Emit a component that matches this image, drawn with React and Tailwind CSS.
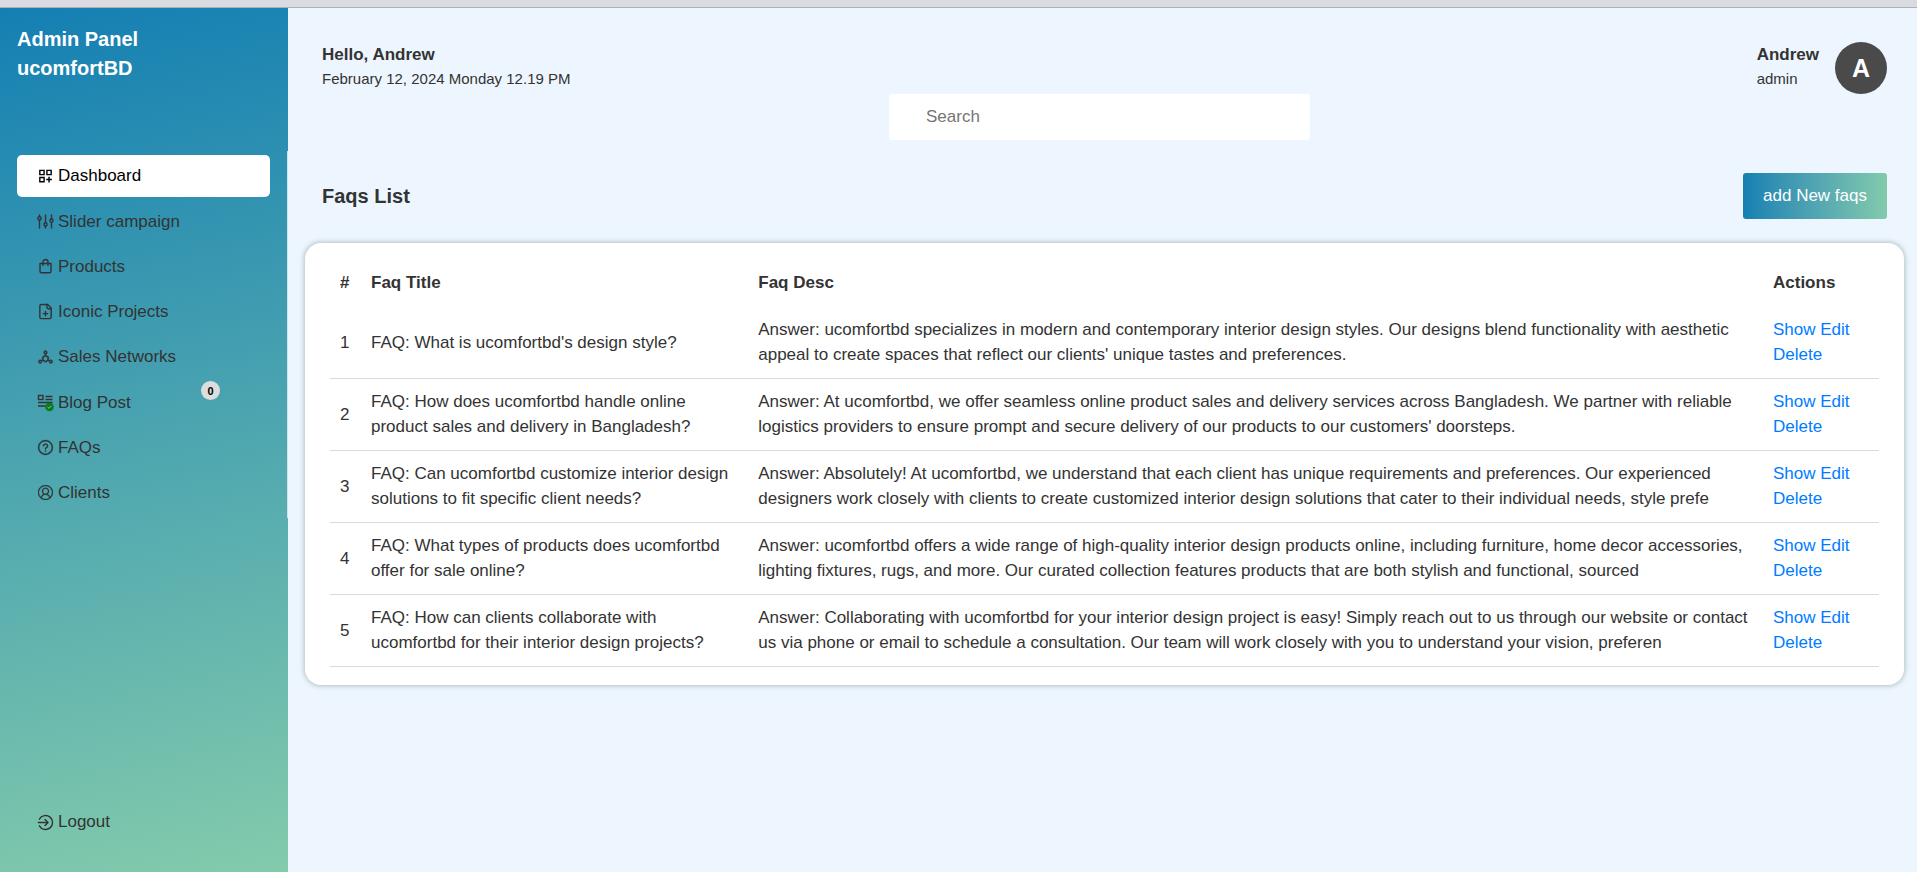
import { MdOutlineDashboardCustomize } from "react-icons/md";
import { AiOutlineDeploymentUnit, AiOutlineQuestionCircle } from "react-icons/ai";
import { LuFilePlus } from "react-icons/lu";
import { VscAccount } from "react-icons/vsc";

function Glyph({ children }) {
  return (
    <svg
      viewBox="0 0 17 17"
      className="size-[17px]"
      fill="none"
      stroke="currentColor"
      strokeWidth="1.4"
      strokeLinecap="round"
      strokeLinejoin="round"
      aria-hidden="true"
    >
      {children}
    </svg>
  );
}

function SlidersIcon() {
  return (
    <Glyph>
      <path d="M2.5 2v1.6M2.5 7V15M8.5 2v7.6M8.5 13V15M14.5 2v4M14.5 9.400V15" />
      <circle cx="2.5" cy="5.4" r="1.6" />
      <circle cx="8.5" cy="11.4" r="1.6" />
      <circle cx="14.5" cy="7.6" r="1.6" />
    </Glyph>
  );
}

function BagIcon() {
  return (
    <Glyph>
      <path d="M3 5.5h11v7.7a1.6 1.6 0 0 1-1.6 1.6H4.6A1.6 1.6 0 0 1 3 13.2z" />
      <path d="M6 7.4V4a2.5 2.5 0 0 1 5 0v3.4" />
    </Glyph>
  );
}

function BlogIcon() {
  return (
    <svg
      viewBox="0 0 17 17"
      className="size-[17px] overflow-visible"
      fill="none"
      stroke="currentColor"
      strokeWidth="1.4"
      aria-hidden="true"
    >
      <rect x="1.5" y="1.5" width="4.5" height="4" />
      <path d="M8.5 2.500h7M8.500 5.500h7M1 8.500h14.500M1 12h8" />
      <circle cx="12.5" cy="13" r="4.3" fill="#0b7d17" stroke="none" />
      <path d="M10.600 13l1.400 1.300 2.400-2.500" stroke="#6fbfc0" strokeWidth="1" />
    </svg>
  );
}

function LogoutIcon() {
  return (
    <Glyph>
      <path d="M2.400 5.200a7 7 0 1 1 0 6.600" />
      <path d="M1.300 8.500h9.600M8 5.400l3.100 3.100L8 11.600" />
    </Glyph>
  );
}

const links = [
  { label: "Dashboard", icon: <MdOutlineDashboardCustomize size={18} />, active: true },
  { label: "Slider campaign", icon: <SlidersIcon /> },
  { label: "Products", icon: <BagIcon /> },
  { label: "Iconic Projects", icon: <LuFilePlus size={17} strokeWidth={2} /> },
  { label: "Sales Networks", icon: <AiOutlineDeploymentUnit size={18} strokeWidth={24} /> },
  { label: "Blog Post", icon: <BlogIcon />, badge: 0 },
  { label: "FAQs", icon: <AiOutlineQuestionCircle size={17} strokeWidth={16} /> },
  { label: "Clients", icon: <VscAccount size={15} strokeWidth={0.3} /> },
];

const faqs = [
  {
    title: "FAQ: What is ucomfortbd's design style?",
    desc: "Answer: ucomfortbd specializes in modern and contemporary interior design styles. Our designs blend functionality with aesthetic appeal to create spaces that reflect our clients' unique tastes and preferences.",
  },
  {
    title: "FAQ: How does ucomfortbd handle online product sales and delivery in Bangladesh?",
    desc: "Answer: At ucomfortbd, we offer seamless online product sales and delivery services across Bangladesh. We partner with reliable logistics providers to ensure prompt and secure delivery of our products to our customers' doorsteps.",
  },
  {
    title: "FAQ: Can ucomfortbd customize interior design solutions to fit specific client needs?",
    desc: "Answer: Absolutely! At ucomfortbd, we understand that each client has unique requirements and preferences. Our experienced designers work closely with clients to create customized interior design solutions that cater to their individual needs, style prefe",
  },
  {
    title: "FAQ: What types of products does ucomfortbd offer for sale online?",
    desc: "Answer: ucomfortbd offers a wide range of high-quality interior design products online, including furniture, home decor accessories, lighting fixtures, rugs, and more. Our curated collection features products that are both stylish and functional, sourced",
  },
  {
    title: "FAQ: How can clients collaborate with ucomfortbd for their interior design projects?",
    desc: "Answer: Collaborating with ucomfortbd for your interior design project is easy! Simply reach out to us through our website or contact us via phone or email to schedule a consultation. Our team will work closely with you to understand your vision, preferen",
  },
];

function NavLink({ label, icon, active, badge }) {
  return (
    <a
      href="#"
      className={`relative flex h-[42px] items-center gap-1 rounded-[5px] pl-5 ${active ? "bg-white text-black" : "text-[#333333]"}`}
    >
      <span className="flex size-[17px] items-center justify-center">{icon}</span>
      {label}
      {badge !== undefined && (
        <span className="absolute top-0 right-[50px] flex size-[19px] items-center justify-center rounded-full bg-[#dddddd] text-[11px] font-bold text-black">
          {badge}
        </span>
      )}
    </a>
  );
}

function Sidebar() {
  return (
    <aside className="flex w-72 shrink-0 flex-col bg-[linear-gradient(168deg,#147fb3,#84cbac)] pt-[17px] pb-[29px]">
      <h1 className="px-[17px] text-[20px] leading-[29px] font-bold text-white">
        Admin Panel
        <br />
        ucomfortBD
      </h1>
      <nav className="mt-[68px] flex h-[367px] flex-col justify-between border-r border-[#cfe3e8] px-[17px] py-1">
        {links.map((link) => (
          <NavLink key={link.label} {...link} />
        ))}
      </nav>
      <div className="mt-auto px-[17px]">
        <NavLink label="Logout" icon={<LogoutIcon />} />
      </div>
    </aside>
  );
}

function FaqTable() {
  return (
    <section className="mt-6 rounded-2xl bg-white px-[25px] pt-[14px] pb-[18px] shadow-[0_0_5px_1px_rgba(90,110,120,0.4)]">
      <table className="w-full table-fixed border-collapse text-left leading-[25px]">
        <colgroup>
          <col className="w-[31px]" />
          <col className="w-1/4" />
          <col />
          <col className="w-[116px]" />
        </colgroup>
        <thead>
          <tr className="h-[50px]">
            <th className="pl-[10px]">#</th>
            <th className="px-[10px]">Faq Title</th>
            <th className="px-[10px]">Faq Desc</th>
            <th className="px-[10px]">Actions</th>
          </tr>
        </thead>
        <tbody>
          {faqs.map((faq, i) => (
            <tr key={faq.title} className="border-b border-[#d8dadd]">
              <td className="pt-[10px] pb-[11px] pl-[10px]">{i + 1}</td>
              <td className="px-[10px] pt-[10px] pb-[11px]">{faq.title}</td>
              <td className="px-[10px] pt-[10px] pb-[11px]">{faq.desc}</td>
              <td className="px-[10px] pt-[10px] pb-[11px] text-[#007bff]">
                <a href="#">Show</a> <a href="#">Edit</a> <a href="#">Delete</a>
              </td>
            </tr>
          ))}
        </tbody>
      </table>
    </section>
  );
}

export default function App() {
  return (
    <div className="flex min-h-screen flex-col bg-[#edf6fe] font-['Liberation_Sans',Arial,sans-serif] text-[17px] text-[#333333]">
      <div className="h-2 border-b border-[#a9b0b7] bg-[#d9dbe0]" />
      <div className="flex flex-1">
        <Sidebar />
        <main className="min-w-0 flex-1 pt-[34px] pr-[13px] pl-[17px]">
          <header className="px-[17px]">
            <div className="flex h-[52px] justify-between">
              <div>
                <p className="leading-[25px] font-bold">Hello, Andrew</p>
                <p className="text-[15px] leading-[23px]">February 12, 2024 Monday 12.19 PM</p>
              </div>
              <div className="flex gap-4">
                <div>
                  <p className="leading-[25px] font-bold">Andrew</p>
                  <p className="text-[15px] leading-[23px]">admin</p>
                </div>
                <div className="flex size-[52px] items-center justify-center rounded-full bg-[#4a4a4a] text-[25px] leading-[25px] font-bold text-white">
                  A
                </div>
              </div>
            </div>
            <form className="mr-[10px] flex justify-center">
              <input
                type="search"
                aria-label="Search"
                placeholder="Search"
                className="h-[46px] w-[421px] rounded-[3px] bg-white px-[37px] outline-none placeholder:text-[#757575]"
              />
            </form>
          </header>
          <div className="mt-[33px] flex items-center justify-between px-[17px]">
            <h2 className="text-[20px] font-bold">Faqs List</h2>
            <button
              type="button"
              className="h-[46px] rounded-[3px] bg-linear-to-r from-[#1380b2] to-[#82caac] px-5 text-white"
            >
              add New faqs
            </button>
          </div>
          <FaqTable />
        </main>
      </div>
    </div>
  );
}
